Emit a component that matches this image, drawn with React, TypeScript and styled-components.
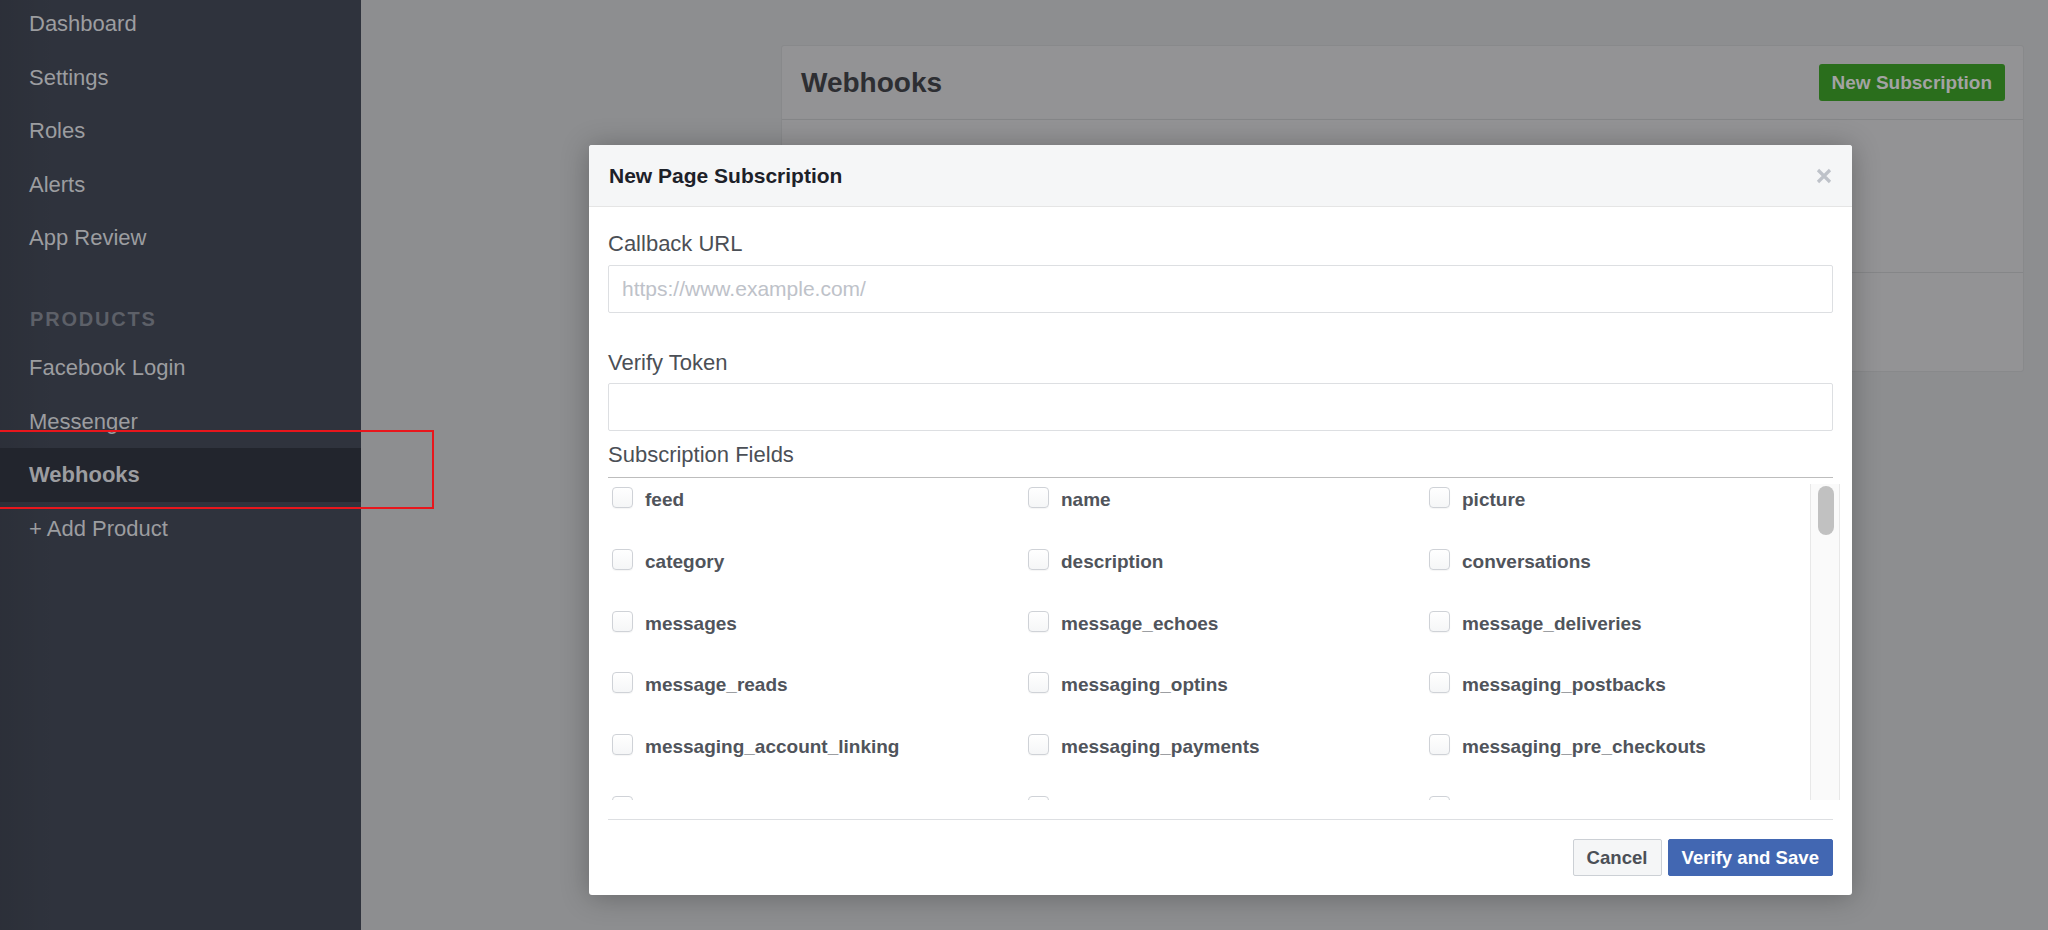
import React from 'react';
import styled, { createGlobalStyle } from 'styled-components';

const GlobalStyle = createGlobalStyle`
  html, body {
    margin: 0;
    padding: 0;
  }
  body {
    font-family: "Liberation Sans", Arial, Helvetica, sans-serif;
    overflow: hidden;
  }
  * {
    box-sizing: border-box;
  }
`;

const Page = styled.div`
  position: relative;
  display: flex;
  width: 2048px;
  height: 930px;
  overflow: hidden;
`;

/* ---------- sidebar ---------- */

const Sidebar = styled.nav`
  flex: 0 0 361px;
  background: linear-gradient(90deg, rgba(0, 0, 0, 0.07) 0, rgba(0, 0, 0, 0) 58px), #2f333d;
`;

const NavList = styled.ul`
  list-style: none;
  margin: -2.75px 0 0;
  padding: 0;
`;

const NavItem = styled.li<{ $active?: boolean }>`
  height: 53.5px;
  display: flex;
  align-items: center;
  padding-left: 29px;
  font-size: 22px;
  color: #9c9da0;
  font-weight: ${p => (p.$active ? 700 : 400)};
  background: ${p => (p.$active ? '#22252d' : 'transparent')};
`;

const NavHeading = styled.li`
  height: 76.5px;
  padding: 42.5px 0 0 30px;
  font-size: 20px;
  line-height: 24px;
  font-weight: 700;
  letter-spacing: 1.8px;
  color: #5d6068;
  text-transform: uppercase;
`;

/* ---------- page behind the dialog ---------- */

const Main = styled.main`
  flex: 1;
  background: #8d8e90;
  padding: 45px 24px 0 420px;
`;

const Card = styled.section`
  background: #939395;
  border: 1px solid #88898b;
  border-radius: 3px;
`;

const CardHeader = styled.header`
  height: 74px;
  border-bottom: 1px solid #858688;
  display: flex;
  align-items: center;
  justify-content: space-between;
  padding: 0 18px 0 19px;
`;

const CardTitle = styled.h2`
  margin: 0;
  font-size: 28px;
  font-weight: 700;
  color: #2d2e32;
`;

const GreenButton = styled.button`
  height: 37px;
  padding: 0 13px;
  border: none;
  border-radius: 3px;
  background: #2a6e1c;
  color: #a3a3a3;
  font-family: inherit;
  font-size: 19px;
  font-weight: 700;
`;

const CardSection = styled.div<{ $h: number; $last?: boolean }>`
  height: ${p => p.$h}px;
  border-bottom: ${p => (p.$last ? 'none' : '1px solid #858688')};
`;

/* ---------- dialog ---------- */

const Modal = styled.div`
  position: absolute;
  left: 589px;
  top: 145px;
  width: 1263px;
  height: 750px;
  background: #fff;
  border-radius: 3px;
  box-shadow: 0 2px 28px rgba(0, 0, 0, 0.28);
  display: flex;
  flex-direction: column;
  overflow: hidden;
`;

const ModalHeader = styled.div`
  height: 62px;
  flex: 0 0 62px;
  background: #f5f6f7;
  border-bottom: 1px solid #e5e5e5;
  display: flex;
  align-items: center;
  justify-content: space-between;
  padding: 0 20px;
`;

const ModalTitle = styled.h3`
  margin: 0;
  font-size: 21px;
  font-weight: 700;
  color: #1d2129;
`;

const CloseButton = styled.span`
  display: flex;
  width: 16px;
  height: 16px;
`;

const ModalBody = styled.div`
  padding: 24px 19px 0;
  display: flex;
  flex-direction: column;
`;

const FieldLabel = styled.label<{ $mt?: number; $mb?: number }>`
  display: block;
  font-size: 22px;
  line-height: 26px;
  color: #4b4f56;
  margin-top: ${p => p.$mt ?? 0}px;
  margin-bottom: ${p => p.$mb ?? 0}px;
`;

const TextInput = styled.input`
  display: block;
  width: 100%;
  height: 48px;
  border: 1px solid #dddfe2;
  border-radius: 2px;
  padding: 0 13px;
  font-family: inherit;
  font-size: 21px;
  color: #1d2129;
  outline: none;
  &::placeholder {
    color: #bec2c9;
  }
`;

const Rule = styled.div`
  height: 1px;
  margin-top: 9px;
  background: #bdbdbd;
`;

const FieldsScroller = styled.div`
  display: flex;
  height: 316px;
  margin: 6px -7px 0 0;
`;

const FieldGrid = styled.div`
  flex: 1;
  overflow: hidden;
  display: grid;
  grid-template-columns: 416px 401px 1fr;
  grid-auto-rows: 61.75px;
  align-content: start;
  padding: 3px 0 0 4px;
`;

const FieldItem = styled.div`
  display: flex;
  align-items: flex-start;
  gap: 12px;
`;

const Checkbox = styled.span`
  flex: 0 0 21px;
  width: 21px;
  height: 21px;
  border: 1px solid #cfd2d7;
  border-radius: 4px;
  background: linear-gradient(#ffffff, #f5f6f7);
  box-shadow: 0 1px 1px rgba(0, 0, 0, 0.04);
`;

const FieldName = styled.span`
  margin-top: 2px;
  font-size: 19px;
  line-height: 21px;
  font-weight: 700;
  color: #50545b;
  white-space: nowrap;
`;

const Track = styled.div`
  flex: 0 0 30px;
  background: #fafafa;
  border-left: 1px solid #e8e8e8;
  border-right: 1px solid #e8e8e8;
  padding: 2px 0 0 7px;
`;

const Thumb = styled.div`
  width: 16px;
  height: 49px;
  border-radius: 8px;
  background: #c1c1c1;
`;

const ModalFooter = styled.div`
  margin: 19px 19px 0;
  border-top: 1px solid #dddfe2;
  padding: 19px 0;
  display: flex;
  justify-content: flex-end;
  gap: 6px;
`;

const FooterButton = styled.button<{ $primary?: boolean }>`
  height: 37px;
  padding: 0 13px;
  border-radius: 2px;
  font-family: inherit;
  font-size: 18.6px;
  font-weight: 700;
  border: 1px solid ${p => (p.$primary ? '#4267b2' : '#ccd0d5')};
  background: ${p => (p.$primary ? '#4267b2' : '#f5f6f7')};
  color: ${p => (p.$primary ? '#ffffff' : '#4b4f56')};
`;

/* annotation drawn over the screenshot */
const Highlight = styled.div`
  position: absolute;
  left: -2px;
  top: 430px;
  width: 436px;
  height: 79px;
  border: 2px solid #e8161c;
  pointer-events: none;
`;

const navTop = ['Dashboard', 'Settings', 'Roles', 'Alerts', 'App Review'];
const navProducts = ['Facebook Login', 'Messenger', 'Webhooks', '+ Add Product'];

// visible rows of the scrolled list; the last row only peeks in at the bottom edge
const fields: (string | null)[] = [
  'feed', 'name', 'picture',
  'category', 'description', 'conversations',
  'messages', 'message_echoes', 'message_deliveries',
  'message_reads', 'messaging_optins', 'messaging_postbacks',
  'messaging_account_linking', 'messaging_payments', 'messaging_pre_checkouts',
  null, null, null,
];

const CloseIcon = () => (
  <svg width="16" height="16" viewBox="0 0 16 16">
    <path d="M2 2 L14 14 M14 2 L2 14" stroke="#bec2c9" strokeWidth="3.2" fill="none" />
  </svg>
);

export default function App() {
  return (
    <Page>
      <GlobalStyle />
      <Sidebar>
        <NavList>
          {navTop.map(n => (
            <NavItem key={n}>{n}</NavItem>
          ))}
          <NavHeading>Products</NavHeading>
          {navProducts.map(n => (
            <NavItem key={n} $active={n === 'Webhooks'}>
              {n}
            </NavItem>
          ))}
        </NavList>
      </Sidebar>

      <Main>
        <Card>
          <CardHeader>
            <CardTitle>Webhooks</CardTitle>
            <GreenButton>New Subscription</GreenButton>
          </CardHeader>
          <CardSection $h={153} />
          <CardSection $h={98} $last />
        </Card>
      </Main>

      <Modal>
        <ModalHeader>
          <ModalTitle>New Page Subscription</ModalTitle>
          <CloseButton>
            <CloseIcon />
          </CloseButton>
        </ModalHeader>
        <ModalBody>
          <FieldLabel $mb={8}>Callback URL</FieldLabel>
          <TextInput placeholder="https://www.example.com/" />
          <FieldLabel $mt={37} $mb={7}>Verify Token</FieldLabel>
          <TextInput />
          <FieldLabel $mt={11}>Subscription Fields</FieldLabel>
          <Rule />
          <FieldsScroller>
            <FieldGrid>
              {fields.map((f, i) => (
                <FieldItem key={i}>
                  <Checkbox />
                  {f && <FieldName>{f}</FieldName>}
                </FieldItem>
              ))}
            </FieldGrid>
            <Track>
              <Thumb />
            </Track>
          </FieldsScroller>
        </ModalBody>
        <ModalFooter>
          <FooterButton>Cancel</FooterButton>
          <FooterButton $primary>Verify and Save</FooterButton>
        </ModalFooter>
      </Modal>

      <Highlight />
    </Page>
  );
}
